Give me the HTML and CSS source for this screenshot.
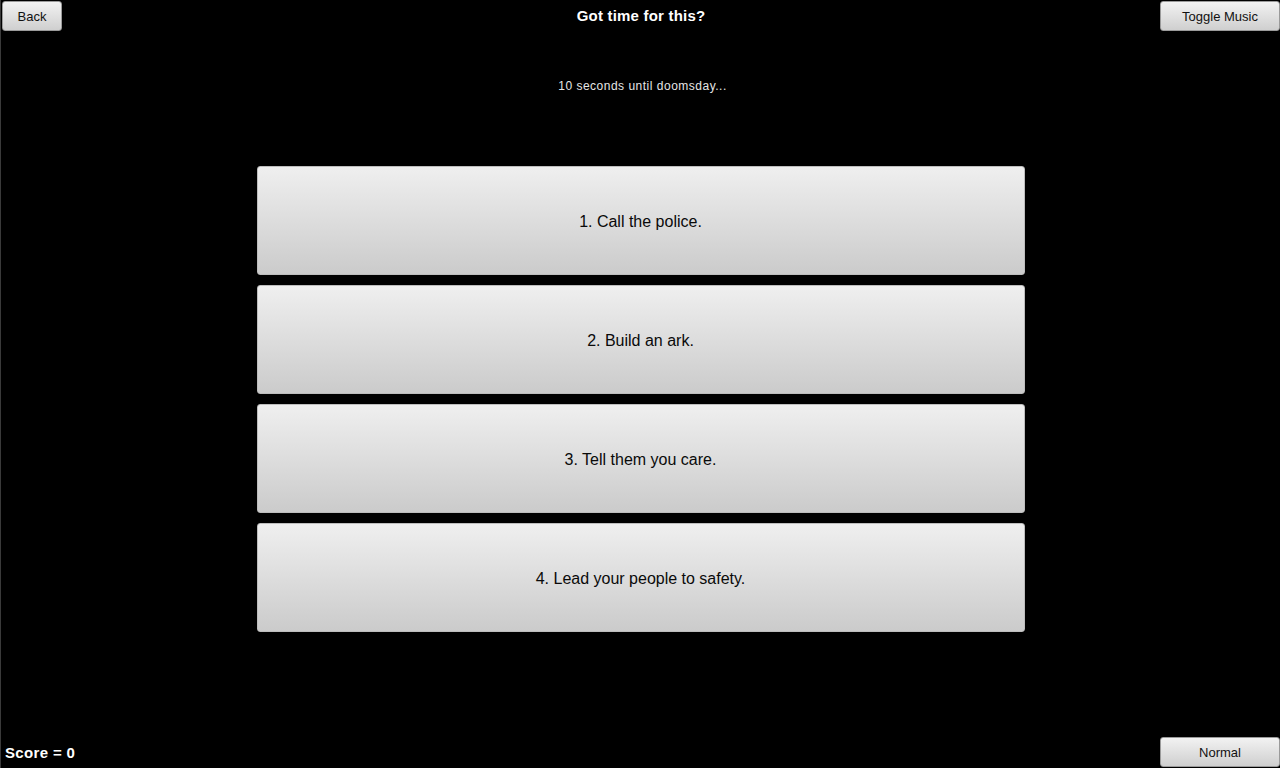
FILE: index.html
```html
<!DOCTYPE html>
<html>
<head>
<meta charset="utf-8">
<link rel="stylesheet" href="styles.css">
</head>
<body>
<div class="page">
  <div class="topbar">
    <div class="left"><button class="btn btn-back">Back</button></div>
    <div class="title">Got time for this?</div>
    <div class="right"><button class="btn btn-wide">Toggle Music</button></div>
  </div>
  <div class="subtitle">10 seconds until doomsday...</div>
  <div class="answers">
    <button class="answer">1. Call the police.</button>
    <button class="answer">2. Build an ark.</button>
    <button class="answer">3. Tell them you care.</button>
    <button class="answer">4. Lead your people to safety.</button>
  </div>
  <div class="footer">
    <div class="score">Score = 0</div>
    <button class="btn btn-wide">Normal</button>
  </div>
</div>
</body>
</html>
```

FILE: styles.css
```css
html, body {
  margin: 0;
  padding: 0;
  background: #000;
}
body {
  font-family: "Liberation Sans", Arial, sans-serif;
}
.page {
  height: 768px;
  box-sizing: border-box;
  border-left: 1px solid #3a3a3a;
  display: flex;
  flex-direction: column;
}
.topbar {
  display: grid;
  grid-template-columns: 1fr auto 1fr;
  align-items: start;
  height: 32px;
  margin-left: -1px;
}
.left { padding: 1px 0 0 2px; }
.right { display: flex; justify-content: flex-end; padding-top: 1px; }
.title {
  color: #fff;
  font-weight: bold;
  font-size: 15px;
  line-height: 17px;
  letter-spacing: 0.2px;
  padding: 7px 0 0 2px;
}
.btn {
  height: 30px;
  box-sizing: border-box;
  border: 1px solid #9a9a9a;
  border-radius: 3px;
  background: linear-gradient(#f2f2f2, #cfcfcf);
  color: #111;
  font-family: "Liberation Sans", Arial, sans-serif;
  font-size: 13px;
  padding: 0;
}
.btn-back { width: 60px; }
.btn-wide { width: 120px; }
.subtitle {
  color: #e6e6e6;
  font-size: 12px;
  line-height: 14px;
  letter-spacing: 0.5px;
  text-align: center;
  margin-top: 47px;
  padding-left: 4px;
}
.answers {
  display: flex;
  flex-direction: column;
  align-items: center;
  gap: 10px;
  margin-top: 73px;
  flex: 1;
}
.answer {
  width: 768px;
  height: 109px;
  box-sizing: border-box;
  border: 1px solid #bdbdbd;
  border-radius: 3px;
  background: linear-gradient(#efefef, #cbcbcb);
  color: #0a0a0a;
  font-family: "Liberation Sans", Arial, sans-serif;
  font-size: 16px;
  padding: 3px 0 0 0;
}
.footer {
  display: flex;
  justify-content: space-between;
  align-items: flex-end;
  padding: 0 0 1px 4px;
}
.score {
  color: #fff;
  font-weight: bold;
  font-size: 15px;
  line-height: 17px;
  letter-spacing: 0.35px;
  padding-bottom: 6px;
}
```
